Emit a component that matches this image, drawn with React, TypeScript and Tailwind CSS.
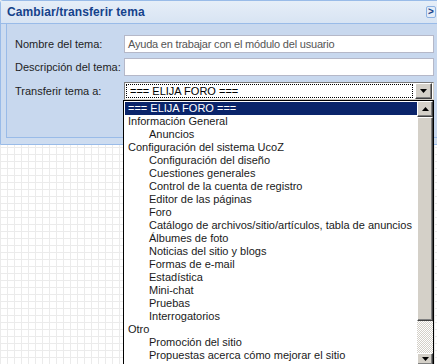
import React from "react";

const options: { label: string; level: number }[] = [
  { label: "Información General", level: 0 },
  { label: "Anuncios", level: 1 },
  { label: "Configuración del sistema UcoZ", level: 0 },
  { label: "Configuración del diseño", level: 1 },
  { label: "Cuestiones generales", level: 1 },
  { label: "Control de la cuenta de registro", level: 1 },
  { label: "Editor de las páginas", level: 1 },
  { label: "Foro", level: 1 },
  { label: "Catálogo de archivos/sitio/artículos, tabla de anuncios", level: 1 },
  { label: "Álbumes de foto", level: 1 },
  { label: "Noticias del sitio y blogs", level: 1 },
  { label: "Formas de e-mail", level: 1 },
  { label: "Estadística", level: 1 },
  { label: "Mini-chat", level: 1 },
  { label: "Pruebas", level: 1 },
  { label: "Interrogatorios", level: 1 },
  { label: "Otro", level: 0 },
  { label: "Promoción del sitio", level: 1 },
  { label: "Propuestas acerca cómo mejorar el sitio", level: 1 },
];

const Arrow = ({ up }: { up?: boolean }) => (
  <svg width="7" height="4" viewBox="0 0 7 4">
    {up ? <path d="M3.5 0 L7 4 L0 4 Z" fill="#000" /> : <path d="M0 0 L7 0 L3.5 4 Z" fill="#000" />}
  </svg>
);

const BevelButton = ({ children, className }: { children?: React.ReactNode; className: string }) => (
  <div
    className={`${className} shrink-0 bg-[#d4d0c8] border border-t-[#ffffff] border-l-[#ffffff] border-r-[#404040] border-b-[#404040] shadow-[inset_-1px_-1px_0_#808080] flex items-center justify-center`}
  >
    {children}
  </div>
);

const App = () => {
  return (
    <div className="relative w-[437px] h-[364px] overflow-hidden bg-white bg-[linear-gradient(#ebebeb_1px,transparent_1px),linear-gradient(90deg,#ebebeb_1px,transparent_1px)] bg-[size:7px_7px] font-['Liberation_Sans',sans-serif]">
      {/* dialog */}
      <div className="w-[450px] h-[145px] bg-[#cddcf0] border border-[#99bbe8] rounded-tl-[3px] flex flex-col">
        <div className="h-[23px] shrink-0 flex items-center justify-between pl-[6px] pr-[13px] bg-[linear-gradient(#e6eef8,#d8e4f3)] border-b border-[#99bbe8]">
          <span className="text-[12px] font-bold text-[#15428b] tracking-[0.1px]">Cambiar/transferir tema</span>
          <div className="w-[10px] h-[12px] border border-[#8db2e3] bg-[#e4ecf7] rounded-[2px] flex items-center justify-center text-[10px] leading-none text-[#15428b] font-bold">
            &gt;
          </div>
        </div>
        <div className="flex-1 px-[5px] pb-[6px]">
          <div className="h-full bg-[#c8d8ee] border border-[#99bbe8] border-t-0 pl-[8px] pt-[11px] flex flex-col gap-[5px]">
            <div className="flex items-center h-[18px]">
              <label className="w-[109px] shrink-0 whitespace-nowrap text-[11px] text-[#1e1e1e]">Nombre del tema:</label>
              <div className="w-[310px] h-[18px] shrink-0 bg-white border border-[#b5b8c8] px-[3px] flex items-center text-[11px] tracking-[-0.2px] text-[#555] whitespace-nowrap">
                Ayuda en trabajar con el módulo del usuario
              </div>
            </div>
            <div className="flex items-center h-[18px]">
              <label className="w-[109px] shrink-0 whitespace-nowrap text-[11px] text-[#1e1e1e]">Descripción del tema:</label>
              <div className="w-[310px] h-[18px] shrink-0 bg-white border border-[#b5b8c8]" />
            </div>
            <div className="flex items-center h-[18px] mt-[1px]">
              <label className="w-[109px] shrink-0 whitespace-nowrap text-[11px] text-[#1e1e1e]">Transferir tema a:</label>
              <div className="w-[310px] h-[18px] shrink-0 bg-white border border-[#7a7a7a] border-r-[#d4d0c8] border-b-[#d4d0c8] flex items-center">
                <div className="flex-1 h-[14px] ml-[1px] mr-[2px] border border-dotted border-black flex items-center pl-[3px] text-[11px] text-black whitespace-nowrap">
                  === ELIJA FORO ===
                </div>
                <BevelButton className="w-[17px] h-[16px] mr-[1px]">
                  <Arrow />
                </BevelButton>
              </div>
            </div>
          </div>
        </div>
      </div>

      {/* open dropdown */}
      <div className="absolute left-[123px] top-[100px] w-[311px] h-[266px] bg-white border border-black flex">
        <div className="flex-1 pt-[1px] pl-[1px]">
          <div className="h-[13px] bg-[#0a246a] text-white text-[11px] leading-[13px] pl-[3px]">=== ELIJA FORO ===</div>
          {options.map((o) => (
            <div
              key={o.label}
              className={`h-[13px] text-[11px] leading-[13px] text-[#1a1a1a] whitespace-nowrap ${o.level ? "pl-[24px]" : "pl-[3px]"}`}
            >
              {o.label}
            </div>
          ))}
        </div>
        <div className="w-[16px] flex flex-col bg-[repeating-conic-gradient(#d4d0c8_0_25%,#ffffff_0_50%)] bg-[size:2px_2px]">
          <BevelButton className="w-[16px] h-[16px]">
            <Arrow up />
          </BevelButton>
          <BevelButton className="w-[16px] h-[204px]" />
          <div className="flex-1" />
          <BevelButton className="w-[16px] h-[12px]">
            <Arrow />
          </BevelButton>
        </div>
      </div>
    </div>
  );
};

export default App;
